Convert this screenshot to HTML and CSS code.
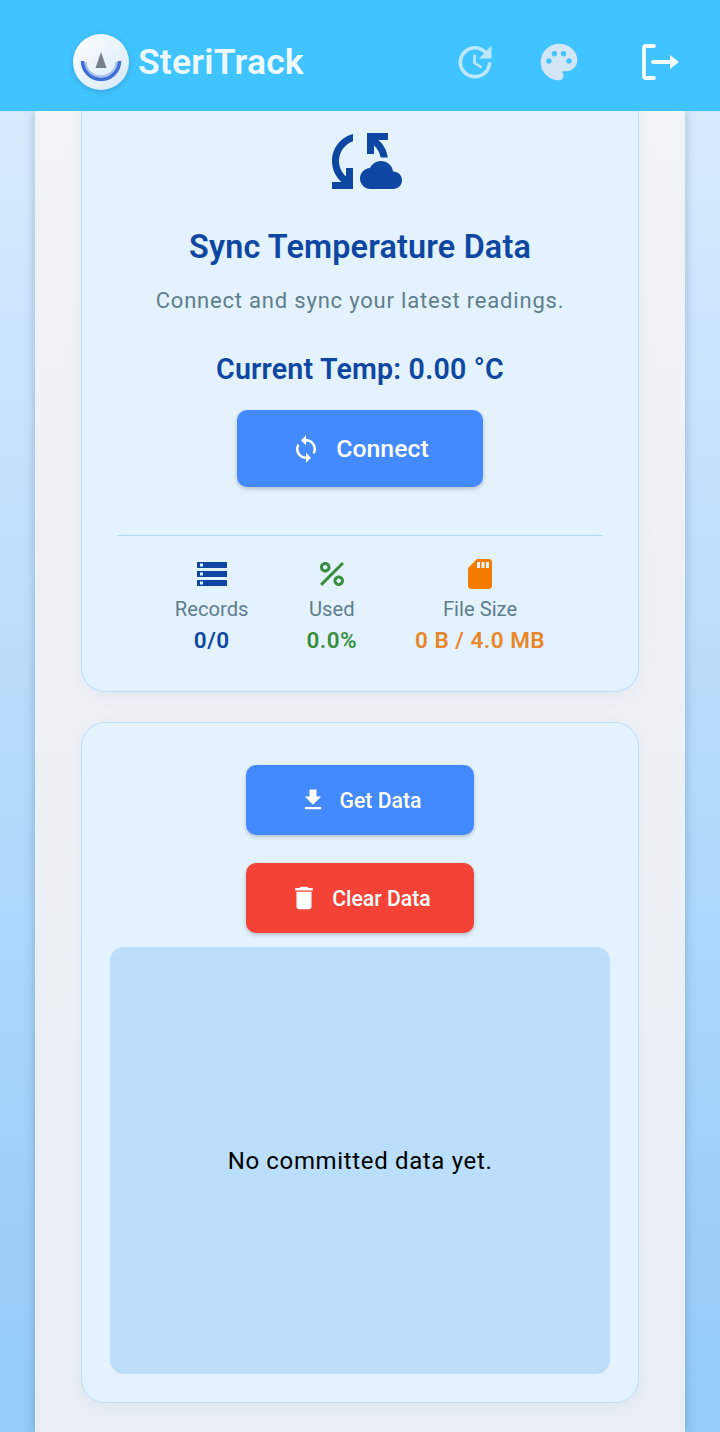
FILE: index.html
```html
<!DOCTYPE html>
<html>
<head>
    <title>SteriTrack</title>
    <link rel="stylesheet" href="styles.css">
</head>
<body>
    <header class="topbar">
        <div class="brand">
            <div class="logo">
                <svg viewBox="0 0 56 56" width="56" height="56">
                    <path d="M28 18 L33.5 34 L22.5 34 Z" fill="#78808c"/>
                    <path d="M12.5 28 A15.5 14.5 0 0 0 43.5 28" fill="none" stroke="#a9c3ee" stroke-width="2.5"/>
                    <path d="M9.5 27 A18.5 18.5 0 0 0 46.5 27" fill="none" stroke="#3f6fd2" stroke-width="3.5"/>
                </svg>
            </div>
            <span class="brand-name">SteriTrack</span>
        </div>
        <div class="actions">
            <svg class="icon-update" viewBox="0 0 24 24" width="44" height="44"><path d="M21 10.12h-6.78l2.74-2.82c-2.73-2.7-7.15-2.8-9.88-.1-2.73 2.71-2.73 7.08 0 9.79s7.15 2.71 9.88 0C18.32 15.65 19 14.08 19 12.1h2c0 1.98-.88 4.55-2.64 6.29-3.51 3.48-9.21 3.48-12.72 0-3.5-3.47-3.53-9.11-.02-12.58s9.14-3.47 12.65 0L21 3v7.12zM12.5 8v4.25l3.5 2.08-.72 1.21L11 13V8h1.5z"/></svg>
            <svg class="icon-palette" viewBox="0 0 24 24" width="44" height="44"><path d="M12 2C6.49 2 2 6.49 2 12s4.49 10 10 10c1.38 0 2.5-1.12 2.5-2.5 0-.61-.23-1.2-.64-1.67-.08-.1-.13-.21-.13-.33 0-.28.22-.5.5-.5H16c3.31 0 6-2.69 6-6 0-4.96-4.49-9-10-9zm-5.5 11c-.83 0-1.5-.67-1.5-1.5S5.67 10 6.5 10 8 10.67 8 11.5 7.33 13 6.5 13zm3-4C8.67 9 8 8.33 8 7.5S8.67 6 9.5 6s1.5.67 1.5 1.5S10.33 9 9.5 9zm5 0c-.83 0-1.5-.67-1.5-1.5S13.67 6 14.5 6s1.5.67 1.5 1.5S15.33 9 14.5 9zm3 4c-.83 0-1.5-.67-1.5-1.5s.67-1.5 1.5-1.5 1.5.67 1.5 1.5-.67 1.5-1.5 1.5z"/></svg>
            <svg class="icon-logout" viewBox="0 0 44 44" width="44" height="44"><path d="M16 6 H8 Q6 6 6 8 V36 Q6 38 8 38 H16" fill="none" stroke="currentColor" stroke-width="3.8" stroke-linecap="round"/><path d="M15 22 H33" stroke="currentColor" stroke-width="3.8" stroke-linecap="round"/><path d="M32 15 L41 22 L32 29 Z" fill="currentColor"/></svg>
        </div>
    </header>

    <main class="panel">
        <section class="card card-sync">
            <svg class="sync-icon" viewBox="0 0 24 24" width="84" height="84"><path d="M21.5 14.98c-.02 0-.03 0-.05.01C21.2 13.3 19.76 12 18 12c-1.4 0-2.6.83-3.16 2.02C13.26 14.1 12 15.4 12 17c0 1.66 1.34 3 3 3l6.5-.02c1.38 0 2.5-1.12 2.5-2.5s-1.12-2.5-2.5-2.5zM10 4.26v2.09C7.67 7.18 6 9.4 6 12c0 1.77.78 3.34 2 4.44V14h2v6H4v-2h2.73C5.06 16.54 4 14.4 4 12c0-3.73 2.55-6.85 6-7.74zM20 6h-2.73c1.43 1.26 2.41 3.01 2.66 5h-2.02c-.23-1.36-.93-2.55-1.91-3.44V10h-2V4h6v2z"/></svg>
            <h2 class="sync-title">Sync Temperature Data</h2>
            <p class="sync-sub">Connect and sync your latest readings.</p>
            <p class="sync-temp">Current Temp: 0.00 °C</p>
            <button class="btn btn-blue btn-connect">
                <svg viewBox="0 0 24 24" width="30" height="30"><path d="M12 4V1L8 5l4 4V6c3.31 0 6 2.69 6 6 0 1.01-.25 1.97-.7 2.8l1.46 1.46C19.54 15.03 20 13.57 20 12c0-4.42-3.58-8-8-8zm0 14c-3.31 0-6-2.69-6-6 0-1.01.25-1.97.7-2.8L5.24 7.74C4.46 8.97 4 10.43 4 12c0 4.42 3.58 8 8 8v3l4-4-4-4v3z"/></svg>
                Connect
            </button>
            <div class="stats">
                <div class="stat stat-records">
                    <svg viewBox="0 0 24 24" width="36" height="36"><path d="M2 20h20v-4H2v4zm2-3h2v2H4v-2zM2 4v4h20V4H2zm4 3H4V5h2v2zm-4 7h20v-4H2v4zm2-3h2v2H4v-2z"/></svg>
                    <span class="stat-label">Records</span>
                    <span class="stat-value">0/0</span>
                </div>
                <div class="stat stat-used">
                    <svg viewBox="0 0 24 24" width="38" height="38"><path d="M7.5 11C9.43 11 11 9.43 11 7.5S9.43 4 7.5 4 4 5.57 4 7.5 5.57 11 7.5 11zm0-5C8.33 6 9 6.67 9 7.5S8.33 9 7.5 9 6 8.33 6 7.5 6.67 6 7.5 6zM4.0025 18.5831 18.59 3.9955l1.4142 1.4142L5.4167 19.9973zM16.5 13c-1.93 0-3.5 1.57-3.5 3.5s1.57 3.5 3.5 3.5 3.5-1.57 3.5-3.5-1.57-3.5-3.5-3.5zm0 5c-.83 0-1.5-.67-1.5-1.5s.67-1.5 1.5-1.5 1.5.67 1.5 1.5-.67 1.5-1.5 1.5z"/></svg>
                    <span class="stat-label">Used</span>
                    <span class="stat-value">0.0%</span>
                </div>
                <div class="stat stat-size">
                    <svg viewBox="0 0 24 24" width="36" height="36"><path d="M18 2h-8L4.02 8 4 20c0 1.1.9 2 2 2h12c1.1 0 2-.9 2-2V4c0-1.1-.9-2-2-2zm-6 6h-2V4h2v4zm3 0h-2V4h2v4zm3 0h-2V4h2v4z"/></svg>
                    <span class="stat-label">File Size</span>
                    <span class="stat-value">0 B / 4.0 MB</span>
                </div>
            </div>
        </section>

        <section class="card card-data">
            <button class="btn btn-blue btn-action btn-get">
                <svg viewBox="0 0 24 24" width="28" height="28"><path d="M19 9h-4V3H9v6H5l7 7 7-7zM5 18v2h14v-2H5z"/></svg>
                Get Data
            </button>
            <button class="btn btn-red btn-action">
                <svg viewBox="0 0 24 24" width="30" height="30"><path d="M6 19c0 1.1.9 2 2 2h8c1.1 0 2-.9 2-2V7H6v12zM19 4h-3.5l-1-1h-5l-1 1H5v2h14V4z"/></svg>
                Clear Data
            </button>
            <div class="data-box">No committed data yet.</div>
        </section>
    </main>
</body>
</html>
```

FILE: styles.css
```css
* { box-sizing: border-box; }
html, body { margin: 0; height: 100%; }
body {
    width: 720px;
    height: 1432px;
    overflow: hidden;
    font-family: Roboto, "Liberation Sans", sans-serif;
    background: linear-gradient(180deg, #dcedfd 0%, #93cbf9 100%);
    display: flex;
    flex-direction: column;
}

.topbar {
    position: relative;
    z-index: 2;
    flex: none;
    height: 111px;
    background-color: #40c4ff;
    display: flex;
    align-items: center;
    justify-content: space-between;
    padding: 13px 38px 0 73px;
}
.brand { display: flex; align-items: center; gap: 9px; }
.logo {
    width: 56px;
    height: 56px;
    border-radius: 50%;
    background: linear-gradient(135deg, #ffffff 0%, #d6e8f7 100%);
    box-shadow: 0 2px 6px rgba(0,0,0,0.15);
}
.logo svg { display: block; }
.brand-name { font-size: 35.5px; font-weight: 600; letter-spacing: 0.2px; color: #eefaff; }
.actions { display: flex; align-items: center; gap: 40px; }
.actions svg { display: block; }
.icon-update { fill: #bde7fc; }
.icon-palette { fill: #d3e6f8; }
.icon-logout { color: #f5fbff; margin-left: 17px; }

.panel {
    flex: 1;
    width: 650px;
    margin: 0 35px;
    padding: 0 46px;
    background: linear-gradient(180deg, #f0f3f7 0%, #e8eef4 100%);
    box-shadow: 0 0 10px rgba(40,70,110,0.3);
    overflow: hidden;
}

.card {
    background-color: #e3f2fd;
    border: 1px solid #bbdefb;
    border-radius: 24px;
    box-shadow: 0 4px 14px rgba(60,90,130,0.05);
    display: flex;
    flex-direction: column;
    align-items: center;
}
.card-sync { margin-top: -20px; height: 601px; padding: 27px 20px 0; }
.card-data { margin-top: 30px; height: 681px; padding: 42px 28px 0; }

.sync-icon { display: block; fill: #0d47a1; flex: none; }
.sync-title { margin: 25px 0 0; font-size: 32.3px; line-height: 38px; font-weight: 600; letter-spacing: 0.2px; color: #0d47a1; white-space: nowrap; }
.sync-sub { margin: 21px 0 0; font-size: 22px; line-height: 28px; color: #607d8b; letter-spacing: 0.8px; white-space: nowrap; }
.sync-temp { margin: 37px 0 0; font-size: 28.6px; line-height: 34px; font-weight: 600; letter-spacing: 0.2px; color: #0d47a1; white-space: nowrap; }

.btn {
    border: none;
    border-radius: 10px;
    color: #fff;
    font-family: inherit;
    font-weight: 500;
    display: flex;
    align-items: center;
    justify-content: center;
    box-shadow: 0 2px 4px rgba(0,0,0,0.2);
}
.btn svg { display: block; fill: currentColor; }
.btn-blue { background-color: #448aff; }
.btn-red { background-color: #f44336; }
.btn-connect { width: 246px; height: 77px; margin-top: 24px; font-size: 24.8px; gap: 15px; }
.btn-action { width: 228px; height: 70px; font-size: 21.2px; gap: 13px; flex: none; }
.btn-get { margin-bottom: 28px; }

.stats {
    width: 486px;
    margin-top: 48px;
    padding-top: 20px;
    border-top: 1px solid #b3dcf5;
    display: flex;
    justify-content: space-evenly;
}
.stat { display: flex; flex-direction: column; align-items: center; }
.stat svg { display: block; height: 36px; }
.stat-label { margin-top: 4px; font-size: 20.2px; line-height: 26px; color: #607d8b; }
.stat-value { margin-top: 5px; font-size: 22.5px; line-height: 26px; font-weight: 600; letter-spacing: 0.5px; }
.stat-records svg, .stat-records .stat-value { fill: #0d47a1; color: #0d47a1; }
.stat-used svg { fill: #388e3c; }
.stat-used .stat-value { color: #388e3c; }
.stat-size svg { fill: #f57c00; }
.stat-size .stat-value { color: #e8862a; }

.data-box {
    width: 500px;
    height: 427px;
    margin-top: 14px;
    flex: none;
    background-color: #bbdefb;
    border-radius: 14px;
    display: flex;
    align-items: center;
    justify-content: center;
    font-size: 24px;
    letter-spacing: 0.65px;
    color: #000;
}
```
